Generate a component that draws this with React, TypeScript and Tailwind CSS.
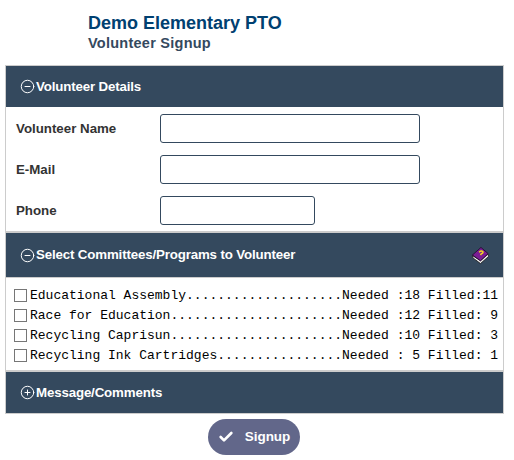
import { Check, CircleMinus, CirclePlus } from "lucide-react";

const committees = [
  "Educational Assembly....................Needed :18 Filled:11",
  "Race for Education......................Needed :12 Filled: 9",
  "Recycling Caprisun......................Needed :10 Filled: 3",
  "Recycling Ink Cartridges................Needed : 5 Filled: 1",
];

function BookIcon() {
  return (
    <svg width="19" height="19" viewBox="0 0 20 20" className="shrink-0">
      <path d="M1.5 10 L2 12.5 L10 18.5 L18.5 11 L18 8.5 L10 15.5 Z" fill="#eeeeee" stroke="#1c1c1c" strokeWidth="0.9" />
      <path d="M1.5 9.5 L10.5 1.5 L18 8 L10 15.5 Z" fill="#7b1d93" stroke="#240830" strokeWidth="0.9" />
      <path d="M8.5 6.5 Q10.8 4.4 12.6 6 Q13 7.6 10.8 8.2 L10 9.6" fill="none" stroke="#f4d820" strokeWidth="1.5" />
    </svg>
  );
}

function PanelHeader({ title, open, className, right }: { title: string; open: boolean; className: string; right?: boolean }) {
  const Icon = open ? CircleMinus : CirclePlus;
  return (
    <div className={`flex items-center bg-[#34495e] pl-[14px] pr-[13px] text-white ${className}`}>
      <Icon size={15} strokeWidth={1.6} className="mr-[1px] shrink-0" />
      <span className="text-[13.3px] font-bold tracking-[-0.15px]">{title}</span>
      {right && (
        <span className="ml-auto flex">
          <BookIcon />
        </span>
      )}
    </div>
  );
}

function Field({ label, inputClass, className }: { label: string; inputClass: string; className: string }) {
  return (
    <div className={`flex items-center ${className}`}>
      <label className="w-[144px] text-[13.3px] font-bold text-[#333333]">{label}</label>
      <input type="text" className={`h-[29px] rounded-[3px] border border-[#34495e] bg-white ${inputClass}`} />
    </div>
  );
}

export default function App() {
  return (
    <div className="h-[460px] w-[514px] overflow-hidden bg-white font-['Liberation_Sans',Arial,sans-serif]">
      <div className="pl-[88px] pt-[12px]">
        <h1 className="text-[18px] leading-[22px] font-bold text-[#004071]">Demo Elementary PTO</h1>
        <h2 className="text-[14.5px] leading-[18px] font-bold tracking-[0.25px] text-[#34495e]">Volunteer Signup</h2>
      </div>

      <div className="mx-[5px] mt-[13px] w-[499px] border border-[#cccccc]">
        <PanelHeader title="Volunteer Details" open className="h-[41px]" />
        <div className="pl-[10px] pt-[7px] pb-[6px]">
          <Field label="Volunteer Name" inputClass="w-[260px]" className="mb-[12px]" />
          <Field label="E-Mail" inputClass="w-[260px]" className="mb-[12px]" />
          <Field label="Phone" inputClass="w-[155px]" className="" />
        </div>
        <div className="h-[2px] bg-[#cccccc]" />
        <PanelHeader title="Select Committees/Programs to Volunteer" open right className="h-[44px]" />
        <div className="border-t border-[#cccccc] pl-[8px] pt-[8px] pb-[4px]">
          {committees.map((c) => (
            <div key={c} className="flex h-[20px] items-center">
              <span className="mr-[3px] h-[13px] w-[13px] shrink-0 -translate-y-[1px] border border-[#767676] bg-white" />
              <span className="whitespace-pre font-['Liberation_Mono','Courier_New',monospace] text-[13px] text-black">{c}</span>
            </div>
          ))}
        </div>
        <div className="h-[2px] bg-[#cccccc]" />
        <PanelHeader title="Message/Comments" open={false} className="h-[41px]" />
      </div>

      <div className="mt-[5px] flex justify-center pr-[6px]">
        <button className="flex h-[36px] w-[92px] items-center justify-center gap-[11px] rounded-full bg-[#62678a] text-white">
          <Check size={16} strokeWidth={4} />
          <span className="text-[13.5px] font-bold">Signup</span>
        </button>
      </div>
    </div>
  );
}
